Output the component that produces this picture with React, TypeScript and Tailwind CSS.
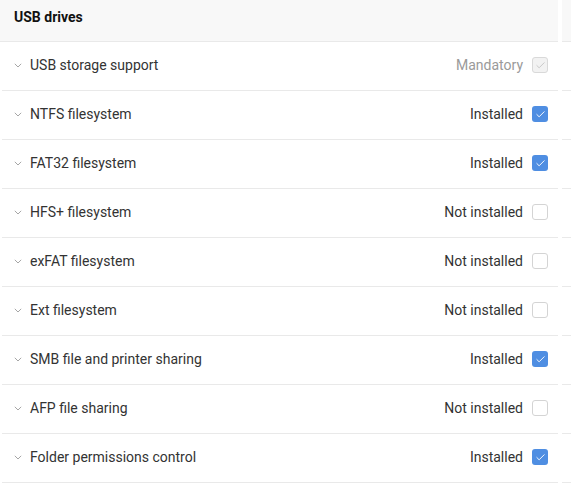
import { Check } from 'lucide-react';

type Status = 'Mandatory' | 'Installed' | 'Not installed';

const rows: { label: string; status: Status }[] = [
  { label: 'USB storage support', status: 'Mandatory' },
  { label: 'NTFS filesystem', status: 'Installed' },
  { label: 'FAT32 filesystem', status: 'Installed' },
  { label: 'HFS+ filesystem', status: 'Not installed' },
  { label: 'exFAT filesystem', status: 'Not installed' },
  { label: 'Ext filesystem', status: 'Not installed' },
  { label: 'SMB file and printer sharing', status: 'Installed' },
  { label: 'AFP file sharing', status: 'Not installed' },
  { label: 'Folder permissions control', status: 'Installed' },
];

function Box({ status }: { status: Status }) {
  if (status === 'Mandatory') {
    return (
      <span className="flex h-[16px] w-[16px] items-center justify-center rounded-[3px] border border-[#d9d9d9] bg-[#f2f2f2]">
        <Check className="h-[11px] w-[11px] text-[#c4c4c4]" strokeWidth={2} />
      </span>
    );
  }
  if (status === 'Installed') {
    return (
      <span className="flex h-[16px] w-[16px] items-center justify-center rounded-[3px] bg-[#4f8ee2]">
        <Check className="h-[11px] w-[11px] text-white" strokeWidth={2} />
      </span>
    );
  }
  return <span className="h-[16px] w-[16px] rounded-[3px] border border-[#d4d4d4] bg-white" />;
}

function Chevron() {
  return (
    <svg width="8" height="5" viewBox="0 0 8 5" className="text-[#a6a6a6]">
      <path d="M0.8 0.8 L4 4 L7.2 0.8" fill="none" stroke="currentColor" strokeWidth="1" />
    </svg>
  );
}

export default function App() {
  return (
    <div className="flex h-[486px] w-[571px] bg-white font-['Roboto',sans-serif]">
      <div className="w-[558px] shrink-0">
        <div className="flex h-[42px] items-center border-b border-[#e9e9e9] bg-[#f8f8f8] pb-[6px] pl-[14px]">
          <span className="text-[14px] font-bold text-[#111]">USB drives</span>
        </div>
        {rows.map((row) => (
          <div
            key={row.label}
            className="ml-[2px] flex h-[49px] items-center border-b border-[#e9e9e9] pb-[2px] pl-[12px] pr-[10px]"
          >
            <Chevron />
            <span className="ml-[8px] flex-1 text-[14px] text-[#333]">{row.label}</span>
            <span
              className={`mr-[9px] text-[14px] ${
                row.status === 'Mandatory' ? 'text-[#9a9a9a]' : 'text-[#333]'
              }`}
            >
              {row.status}
            </span>
            <Box status={row.status} />
          </div>
        ))}
      </div>
      <div className="ml-[4px] flex-1">
        <div className="h-[42px] border-b border-[#e9e9e9] bg-[#f8f8f8]" />
        {rows.map((row) => (
          <div key={row.label} className="h-[49px] border-b border-[#e9e9e9]" />
        ))}
      </div>
    </div>
  );
}
